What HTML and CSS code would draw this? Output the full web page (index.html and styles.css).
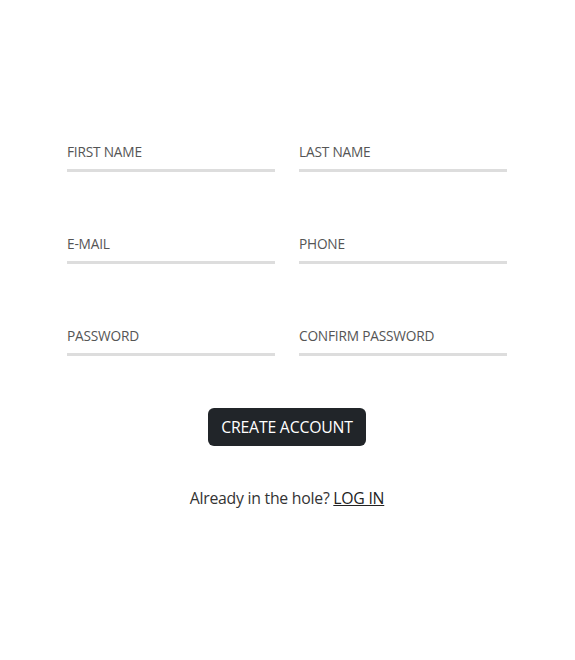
FILE: index.html
```html
<!DOCTYPE html>
<html>
<head>
<meta charset="utf-8">
<link rel="stylesheet" href="styles.css">
</head>
<body>
<main class="page">
  <form class="form">
    <div class="grid">
      <label class="field"><span class="label">FIRST NAME</span></label>
      <label class="field"><span class="label">LAST NAME</span></label>
      <label class="field"><span class="label">E-MAIL</span></label>
      <label class="field"><span class="label">PHONE</span></label>
      <label class="field"><span class="label">PASSWORD</span></label>
      <label class="field"><span class="label">CONFIRM PASSWORD</span></label>
    </div>
    <button type="button" class="btn">CREATE ACCOUNT</button>
    <p class="login">Already in the hole? <a href="#" class="link">LOG IN</a></p>
  </form>
</main>
</body>
</html>
```

FILE: styles.css
```css
html, body {
  margin: 0;
  padding: 0;
  background: #ffffff;
}
body {
  font-family: "Open Sans", "Noto Sans", sans-serif;
  color: #333;
}
.page {
  display: flex;
  justify-content: center;
  padding-top: 142px;
  padding-right: 1px;
}
.form {
  width: 440px;
  display: flex;
  flex-direction: column;
  align-items: center;
}
.grid {
  width: 100%;
  display: grid;
  grid-template-columns: 208px 208px;
  column-gap: 24px;
  row-gap: 62px;
}
.field {
  display: block;
  padding-bottom: 7px;
  border-bottom: 3px solid #dddddd;
}
.label {
  display: block;
  font-size: 13.7px;
  line-height: 20px;
  color: #555;
  letter-spacing: -0.2px;
}
.btn {
  margin-top: 52px;
  height: 38px;
  width: 158px;
  padding: 0;
  border: none;
  border-radius: 6px;
  background: #212529;
  color: #ffffff;
  font-family: inherit;
  font-size: 15.8px;
  letter-spacing: -0.2px;
}
.login {
  margin: 41px 0 0;
  font-size: 15.8px;
  line-height: 22px;
  color: #333;
  letter-spacing: -0.25px;
}
.link {
  color: #222;
  text-decoration: underline;
}
```
